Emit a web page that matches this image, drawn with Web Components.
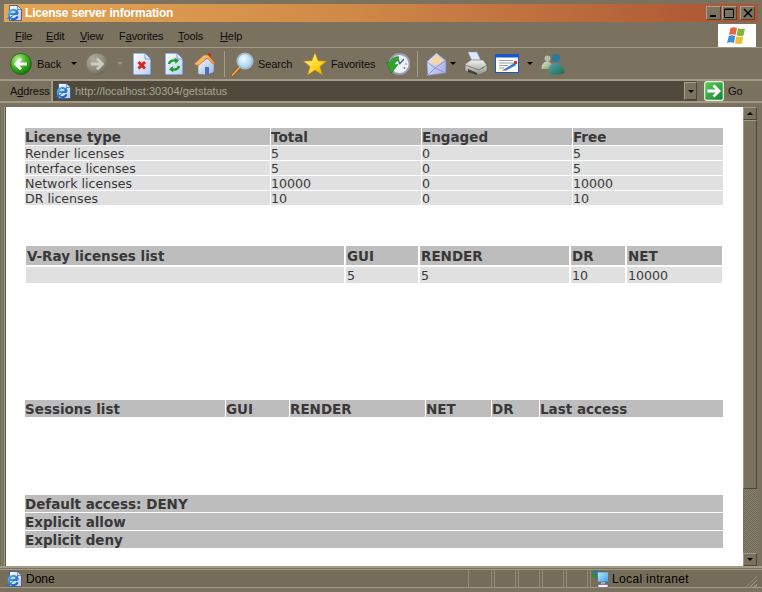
<!DOCTYPE html>
<html>
<head>
<meta charset="utf-8">
<title>License server information</title>
<style>
    html, body { margin: 0; padding: 0; background: #7a725f; overflow: hidden; }
</style>
</head>
<body>
<xp-window>
    <xp-titlebar slot="top">License server information</xp-titlebar>
    <xp-menubar slot="top">
        <span><u>F</u>ile</span><span><u>E</u>dit</span><span><u>V</u>iew</span><span>F<u>a</u>vorites</span><span><u>T</u>ools</span><span><u>H</u>elp</span>
    </xp-menubar>
    <xp-toolbar slot="top"></xp-toolbar>
    <xp-addressbar slot="top" url="http://localhost:30304/getstatus"></xp-addressbar>

    <data-table cols="245px 150px 150px 150px" gap="1" style="margin-top:21px">
        <data-cell head>License type</data-cell><data-cell head>Total</data-cell><data-cell head>Engaged</data-cell><data-cell head>Free</data-cell>
        <data-cell>Render licenses</data-cell><data-cell>5</data-cell><data-cell>0</data-cell><data-cell>5</data-cell>
        <data-cell>Interface licenses</data-cell><data-cell>5</data-cell><data-cell>0</data-cell><data-cell>5</data-cell>
        <data-cell>Network licenses</data-cell><data-cell>10000</data-cell><data-cell>0</data-cell><data-cell>10000</data-cell>
        <data-cell>DR licenses</data-cell><data-cell>10</data-cell><data-cell>0</data-cell><data-cell>10</data-cell>
    </data-table>

    <data-table cols="318px 72px 149px 54px 95px" gap="2" spaced style="margin:41px 1px 0">
        <data-cell head>V-Ray licenses list</data-cell><data-cell head>GUI</data-cell><data-cell head>RENDER</data-cell><data-cell head>DR</data-cell><data-cell head>NET</data-cell>
        <data-cell></data-cell><data-cell>5</data-cell><data-cell>5</data-cell><data-cell>10</data-cell><data-cell>10000</data-cell>
    </data-table>

    <data-table cols="200px 63px 135px 65px 47px 183px" gap="1" style="margin-top:117px">
        <data-cell head>Sessions list</data-cell><data-cell head>GUI</data-cell><data-cell head>RENDER</data-cell><data-cell head>NET</data-cell><data-cell head>DR</data-cell><data-cell head>Last access</data-cell>
    </data-table>

    <data-table cols="698px" gap="1" style="margin-top:78px">
        <data-cell head>Default access: DENY</data-cell>
        <data-cell head>Explicit allow</data-cell>
        <data-cell head>Explicit deny</data-cell>
    </data-table>

    <xp-statusbar slot="bottom"></xp-statusbar>
</xp-window>

<script>
// ==================== icons ====================

const IE_MARK = `
    <defs><linearGradient id="p" x1="0" y1="0" x2="1" y2="1"><stop offset="0" stop-color="#fff"/><stop offset="1" stop-color="#b7c9ee"/></linearGradient>
    <linearGradient id="e" x1="0" y1="0" x2="1" y2="1"><stop offset="0" stop-color="#58b6f2"/><stop offset="1" stop-color="#0f55c0"/></linearGradient></defs>
    <path d="M3.500.5h8l4 4v11h-12z" fill="url(#p)" stroke="#46557f" stroke-width=".9"/>
    <path d="M11.500 4.500v-4l4 4z" fill="#dfe8fa" stroke="#46557f" stroke-width=".6"/>
    <path d="M3.500 8.800h8.300M11.600 11.400a4.600 4.600 0 1 1 .3-2.600" fill="none" stroke="url(#e)" stroke-width="2.200"/>
    <path d="M.8 13.500c2 1 9-4.500 11.500-9.500" fill="none" stroke="#1d6fd0" stroke-width="1"/>`;

const ICONS = {
    back: `<svg width="22" height="22" viewBox="0 0 22 22">
        <defs><radialGradient id="g" cx="35%" cy="28%" r="80%"><stop offset="0" stop-color="#b8f08a"/><stop offset=".5" stop-color="#3fb51f"/><stop offset="1" stop-color="#0d6b0d"/></radialGradient></defs>
        <circle cx="11" cy="11" r="10.500" fill="url(#g)" stroke="#1f5f14" stroke-width=".7"/>
        <path d="M17 11H6.500M11 5.800 5.800 11l5.200 5.200" fill="none" stroke="#fff" stroke-width="3"/></svg>`,
    forward: `<svg width="22" height="22" viewBox="0 0 22 22">
        <defs><radialGradient id="g" cx="35%" cy="28%" r="80%"><stop offset="0" stop-color="#b0ab9e"/><stop offset=".6" stop-color="#8f8b7f"/><stop offset="1" stop-color="#66625a"/></radialGradient></defs>
        <circle cx="11" cy="11" r="10.500" fill="url(#g)"/>
        <path d="M5 11h10.500M11 5.800 16.200 11 11 16.200" fill="none" stroke="#cfccc2" stroke-width="3"/></svg>`,
    stop: `<svg width="20" height="24" viewBox="0 0 20 24">
        <defs><linearGradient id="g" x1="0" y1="0" x2="1" y2="1"><stop offset="0" stop-color="#fff"/><stop offset="1" stop-color="#b9cdf2"/></linearGradient></defs>
        <path d="M1 1h12l6 6v16H1z" fill="url(#g)" stroke="#5d6f9f"/><path d="M13 1v6h6z" fill="#dce6f8" stroke="#5d6f9f" stroke-width=".6"/>
        <path d="M6.500 10l6.500 6.500M13 10l-6.500 6.500" stroke="#d8261c" stroke-width="3"/></svg>`,
    refresh: `<svg width="20" height="24" viewBox="0 0 20 24">
        <defs><linearGradient id="g" x1="0" y1="0" x2="1" y2="1"><stop offset="0" stop-color="#fff"/><stop offset="1" stop-color="#b9cdf2"/></linearGradient></defs>
        <path d="M1 1h12l6 6v16H1z" fill="url(#g)" stroke="#5d6f9f"/><path d="M13 1v6h6z" fill="#dce6f8" stroke="#5d6f9f" stroke-width=".6"/>
        <path d="M5 12c.5-3 4-4.500 7-3" fill="none" stroke="#17a02c" stroke-width="2.400"/><path d="M10.500 5.500l4.500 3-3.500 3.500z" fill="#17a02c"/>
        <path d="M15 14c-.5 3-4 4.500-7 3" fill="none" stroke="#17a02c" stroke-width="2.400"/><path d="M9.500 20.500l-4.500-3 3.500-3.500z" fill="#17a02c"/></svg>`,
    home: `<svg width="24" height="24" viewBox="0 0 24 24">
        <defs><linearGradient id="g" x1="0" y1="0" x2="1" y2="1"><stop offset="0" stop-color="#ffd58a"/><stop offset="1" stop-color="#ef8a2c"/></linearGradient>
        <linearGradient id="w" x1="0" y1="0" x2="1" y2="1"><stop offset="0" stop-color="#f4f7ff"/><stop offset="1" stop-color="#9db4e4"/></linearGradient></defs>
        <rect x="15" y="1" width="3" height="5" fill="#a63a22"/>
        <path d="M5 12v10l9 1 7-3V10l-6-4z" fill="url(#w)" stroke="#6b7aa0" stroke-width=".6"/>
        <path d="M1 12 11 3l4 0 7 8-2 1-6-6-9 8z" fill="url(#g)" stroke="#b8691f" stroke-width=".6"/>
        <path d="M12 15h4v8h-4z" fill="#4a6fb5"/></svg>`,
    search: `<svg width="24" height="26" viewBox="0 0 24 26">
        <defs><radialGradient id="g" cx="40%" cy="35%" r="70%"><stop offset="0" stop-color="#f2fbff"/><stop offset="1" stop-color="#8ecdf0"/></radialGradient></defs>
        <path d="M2.500 24 9 17" stroke="#8a5a2a" stroke-width="3.600" stroke-linecap="round"/><path d="M2.500 24 9 17" stroke="#eeaa58" stroke-width="1.800" stroke-linecap="round"/>
        <circle cx="15" cy="10" r="7.700" fill="url(#g)" stroke="#a9b7c6" stroke-width="1.800"/></svg>`,
    star: `<svg width="24" height="24" viewBox="0 0 24 24">
        <defs><linearGradient id="g" x1="0" y1="0" x2="1" y2="1"><stop offset="0" stop-color="#fff79a"/><stop offset=".6" stop-color="#ffd51e"/><stop offset="1" stop-color="#e89a08"/></linearGradient></defs>
        <path d="M12 .8 15.200 8.800 23.500 9.200 17 14.500 19.500 23 12 18.200 4.500 23 7 14.500.5 9.200 8.800 8.800z" fill="url(#g)" stroke="#b8860b" stroke-width=".6"/></svg>`,
    history: `<svg width="24" height="24" viewBox="0 0 24 24">
        <circle cx="13.500" cy="12" r="10" fill="#e9f3fb" stroke="#9a9fb5" stroke-width="1.800"/>
        <path d="M13.500 12 18 7M13.500 12l-1-4" stroke="#4d5a78" stroke-width="1.200"/><circle cx="18.500" cy="16" r="1" fill="#e05a3c"/><circle cx="20" cy="12" r=".8" fill="#e05a3c"/>
        <path d="M.5 10.500l5 10.500 6.500-8.500-3.500.2c.4-2.300 1.700-3.700 4-4.300V4.500C7.500 5 4.600 7.200 4 10.500z" fill="#2fa52b" stroke="#17701a" stroke-width=".5"/></svg>`,
    mail: `<svg width="21" height="24" viewBox="0 0 21 24">
        <defs><linearGradient id="g" x1="0" y1="0" x2="1" y2="1"><stop offset="0" stop-color="#e0f2ff"/><stop offset="1" stop-color="#a8a6e6"/></linearGradient></defs>
        <path d="M1 9.500 10.500 1 20 8.500V21L1.500 23.500z" fill="url(#g)" stroke="#7d82c0" stroke-width=".7"/>
        <path d="M3.500 9.500 10.500 3l7 5.500-7 5z" fill="#f6d79c"/>
        <path d="M1 10l8 6 11-7.500M1.500 23.500 9 16l11 5" fill="none" stroke="#8a8fd0" stroke-width=".9"/></svg>`,
    print: `<svg width="24" height="25" viewBox="0 0 24 25">
        <defs><linearGradient id="g" x1="0" y1="0" x2="0" y2="1"><stop offset="0" stop-color="#f2f2ee"/><stop offset="1" stop-color="#8f8f8a"/></linearGradient></defs>
        <path d="M4 1h9l4 9H8z" fill="#dfe9fa" stroke="#8f9bb0" stroke-width=".6"/>
        <path d="M1 13l6-4h12l4 5v6l-8 4-14-4z" fill="url(#g)" stroke="#5f5f5a" stroke-width=".6"/>
        <path d="M1 14l14 5 8-5" fill="none" stroke="#6d6d68" stroke-width=".8"/><path d="M4 18l9 4v2l-9-3z" fill="#3f3f3c"/><rect x="18" y="16" width="2" height="1.500" fill="#38b13c"/></svg>`,
    edit: `<svg width="24" height="19" viewBox="0 0 24 19">
        <rect x=".5" y=".5" width="23" height="18" fill="#fff" stroke="#1a58c8"/><rect x="1" y="1" width="22" height="2.500" fill="#1a58c8"/>
        <path d="M4 6.500h14M4 9h16M4 11.500h9M4 14h5" stroke="#9a9ca8"/>
        <path d="M8 16l11-7 2.500 2L10 17z" fill="#3d7ad8"/><rect x="19" y="7" width="3" height="3" fill="#d8322a"/><path d="M6.500 17 8 15l2 2z" fill="#e6b53c"/></svg>`,
    messenger: `<svg width="24" height="22" viewBox="0 0 24 22">
        <defs><linearGradient id="g" x1="0" y1="0" x2="1" y2="1"><stop offset="0" stop-color="#5aa4b8"/><stop offset="1" stop-color="#1e6a48"/></linearGradient>
        <linearGradient id="h" x1="0" y1="0" x2="1" y2="1"><stop offset="0" stop-color="#e4e6cc"/><stop offset="1" stop-color="#7e9a6c"/></linearGradient></defs>
        <circle cx="6.500" cy="5.500" r="3" fill="#b4bfa8"/><path d="M.5 16c0-5 2.500-7.500 6-7.500s5 3 5 7.500z" fill="url(#h)"/>
        <circle cx="15" cy="5" r="4.300" fill="#2f7898"/><path d="M7 21c0-7.500 3-11 8-11s8.500 4 8.500 10c-3 2-13 2-16.500 1z" fill="url(#g)"/></svg>`,
    ie: `<svg width="16" height="16" viewBox="0 0 16 16">${IE_MARK}</svg>`,
    go: `<svg width="20" height="20" viewBox="0 0 20 20">
        <defs><linearGradient id="g" x1="0" y1="0" x2="1" y2="1"><stop offset="0" stop-color="#63cf5a"/><stop offset="1" stop-color="#0f7f35"/></linearGradient></defs>
        <rect x=".7" y=".7" width="18.600" height="18.600" rx="2" fill="url(#g)" stroke="#e7f3dd" stroke-width="1.200"/>
        <path d="M3.500 10h10M9.500 4.500l5.500 5.500-5.500 5.500" fill="none" stroke="#fff" stroke-width="2.800"/></svg>`,
    flag: `<svg width="20" height="19" viewBox="0 0 20 19">
        <path d="M3.500 2C6 .8 7.500 1 10 2L8.500 9C6 8 4 8 2 9z" fill="#e8643a"/>
        <path d="M11 2.300c2.500 1 4.500 1 7 .2L16.500 9.500c-2.500.8-4.500.6-7-.2z" fill="#7cb83a"/>
        <path d="M1.800 10C4 9 6 9 8.300 10L7 17c-2.500-1-4.500-1-7 0z" fill="#3f8fdf"/>
        <path d="M9.300 10.300c2.500 1 4.500 1 7 .2L15 17.500c-2.500.8-4.500.6-7-.2z" fill="#f2c02e"/></svg>`,
    network: `<svg width="17" height="18" viewBox="0 0 17 18">
        <defs><linearGradient id="g" x1="0" y1="0" x2="1" y2="1"><stop offset="0" stop-color="#b8ecff"/><stop offset="1" stop-color="#3f9ae8"/></linearGradient></defs>
        <circle cx="4" cy="4.500" r="4" fill="#2f8a3a"/><path d="M1.200 2c1.500-1.800 4-1.800 5.500 0L4 5z" fill="#2d6fd0"/>
        <rect x="5.500" y="2" width="11" height="10" rx=".7" fill="url(#g)" stroke="#57616f" stroke-width=".7"/>
        <path d="M9 12h4v2.500H9z" fill="#a3a9b4"/><path d="M6 14.500h10v3H6z" fill="#f0f0f4" stroke="#5a5575" stroke-width=".6"/></svg>`,
};

class XpIcon extends HTMLElement {
    connectedCallback() {
        if (this.shadowRoot) return;
        this.attachShadow({ mode: 'open' });
        this.shadowRoot.innerHTML = `
            <style>
                :host { display: block; flex: none; line-height: 0; }
                svg { display: block; }
            </style>
            ${ICONS[this.getAttribute('name')] || ''}
        `;
    }
}
customElements.define('xp-icon', XpIcon);

const UI_FONT = `"Liberation Sans", "Noto Sans", sans-serif`;

// ==================== window ====================

class XpWindow extends HTMLElement {
    constructor() {
        super();
        this.attachShadow({ mode: 'open' });
        this.shadowRoot.innerHTML = `
            <style>
                :host {
                    display: flex;
                    flex-direction: column;
                    width: 762px;
                    height: 592px;
                    padding-top: 4px;
                    box-sizing: border-box;
                    background: #7a725f;
                    overflow: hidden;
                    font-family: ${UI_FONT};
                }
                .middle {
                    display: flex;
                    height: 459px;
                    padding: 0 5px 0 6px;
                    flex: none;
                    background: linear-gradient(90deg, #6f6856 0 1px, #8a8370 1px 2px, #7a725f 2px 4px, #a39b85 4px 5px, #5d5747 5px 6px, transparent 6px);
                }
                .page {
                    flex: 1;
                    background: #fff;
                    padding: 0 20px 0 19px;
                    min-width: 0;
                    font-family: "DejaVu Sans", Verdana, sans-serif;
                    color: #383838;
                }
            </style>
            <slot name="top"></slot>
            <div class="middle">
                <div class="page"><slot></slot></div>
                <xp-scrollbar></xp-scrollbar>
            </div>
            <slot name="bottom"></slot>
        `;
    }
}
customElements.define('xp-window', XpWindow);

class XpTitlebar extends HTMLElement {
    constructor() {
        super();
        this.attachShadow({ mode: 'open' });
        this.shadowRoot.innerHTML = `
            <style>
                :host {
                    display: flex;
                    align-items: center;
                    height: 18px;
                    margin: 0 4px;
                    padding-left: 2px;
                    background: linear-gradient(90deg, #e3a655 0%, #d08a48 45%, #b05a36 92%, #ad5534 100%);
                    font: bold 12px ${UI_FONT};
                    color: #fff;
                }
                .caption { margin-left: 3px; flex: 1; letter-spacing: -.2px; }
                .btns { display: flex; margin-right: 3px; }
                .btn {
                    width: 15px;
                    height: 14px;
                    box-sizing: border-box;
                    background: #7a725f;
                    border: 1px solid;
                    border-color: #aaa38f #4b4639 #4b4639 #aaa38f;
                    display: flex;
                    align-items: center;
                    justify-content: center;
                }
            </style>
            <xp-icon name="ie"></xp-icon>
            <span class="caption"><slot></slot></span>
            <div class="btns">
                <div class="btn" style="margin-right:1px"><svg width="10" height="10"><rect x="1" y="7" width="6" height="2"/></svg></div>
                <div class="btn" style="margin-right:3px"><svg width="11" height="10"><path d="M.5 1.500h9v8h-9zM.5 1h9" fill="none" stroke="#000"/></svg></div>
                <div class="btn"><svg width="10" height="10"><path d="M1 1l8 8M9 1 1 9" stroke="#000" stroke-width="1.500"/></svg></div>
            </div>
        `;
    }
}
customElements.define('xp-titlebar', XpTitlebar);

class XpMenubar extends HTMLElement {
    constructor() {
        super();
        this.attachShadow({ mode: 'open' });
        this.shadowRoot.innerHTML = `
            <style>
                :host {
                    display: flex;
                    align-items: center;
                    height: 24px;
                    margin-top: 2px;
                    padding-left: 15px;
                    box-sizing: border-box;
                    border-bottom: 1px solid #a39b85;
                    font: 11px ${UI_FONT};
                    letter-spacing: -.1px;
                    color: #0c0c0c;
                }
                .items {
                    display: grid;
                    grid-template-columns: 31px 34px 39px 59px 42px 30px;
                    flex: 1;
                }
                .flag {
                    width: 38px;
                    height: 23px;
                    margin-right: 6px;
                    background: #fff;
                    display: flex;
                    align-items: center;
                    justify-content: center;
                }
            </style>
            <div class="items"><slot></slot></div>
            <div class="flag"><xp-icon name="flag"></xp-icon></div>
        `;
    }
}
customElements.define('xp-menubar', XpMenubar);

class XpToolbar extends HTMLElement {
    constructor() {
        super();
        this.attachShadow({ mode: 'open' });
        this.shadowRoot.innerHTML = `
            <style>
                :host {
                    display: flex;
                    align-items: center;
                    height: 33px;
                    padding-left: 10px;
                    box-sizing: border-box;
                    border-bottom: 2px solid #a39b85;
                    font: 11px ${UI_FONT};
                    letter-spacing: -.1px;
                    color: #0c0c0c;
                }
                .label { flex: none; white-space: nowrap; }
                .drop {
                    flex: none;
                    width: 0;
                    height: 0;
                    border: 3px solid transparent;
                    border-top: 3px solid #000;
                    border-bottom: 0;
                }
                .drop.off { border-top-color: #98927f; }
                .sep { flex: none; width: 1px; height: 26px; background: #a39b85; }
            </style>
            <xp-icon name="back"></xp-icon>
            <span class="label" style="margin-left:5px;width:24px">Back</span>
            <div class="drop" style="margin-left:10px"></div>
            <xp-icon name="forward" style="margin-left:9px"></xp-icon>
            <div class="drop off" style="margin-left:9px"></div>
            <xp-icon name="stop" style="margin-left:9px"></xp-icon>
            <xp-icon name="refresh" style="margin-left:12px"></xp-icon>
            <xp-icon name="home" style="margin-left:9px"></xp-icon>
            <div class="sep" style="margin-left:7px"></div>
            <xp-icon name="search" style="margin-left:5px"></xp-icon>
            <span class="label" style="margin-left:4px;width:33px">Search</span>
            <xp-icon name="star" style="margin-left:12px"></xp-icon>
            <span class="label" style="margin-left:4px;width:42px">Favorites</span>
            <xp-icon name="history" style="margin-left:13px"></xp-icon>
            <div class="sep" style="margin-left:7px"></div>
            <xp-icon name="mail" style="margin-left:8px"></xp-icon>
            <div class="drop" style="margin-left:3px"></div>
            <xp-icon name="print" style="margin-left:8px"></xp-icon>
            <xp-icon name="edit" style="margin-left:7px"></xp-icon>
            <div class="drop" style="margin-left:8px"></div>
            <xp-icon name="messenger" style="margin-left:8px"></xp-icon>
        `;
    }
}
customElements.define('xp-toolbar', XpToolbar);

class XpAddressbar extends HTMLElement {
    constructor() {
        super();
        this.attachShadow({ mode: 'open' });
        this.shadowRoot.innerHTML = `
            <style>
                :host {
                    display: flex;
                    align-items: center;
                    height: 22px;
                    margin-bottom: 4px;
                    padding-left: 10px;
                    box-sizing: border-box;
                    border-bottom: 2px solid #a39b85;
                    font: 11px ${UI_FONT};
                    letter-spacing: -.1px;
                    color: #0c0c0c;
                }
                .name { width: 41px; flex: none; white-space: nowrap; }
                .field {
                    display: flex;
                    align-items: center;
                    width: 646px;
                    height: 20px;
                    flex: none;
                    box-sizing: border-box;
                    padding: 0 0 0 2px;
                    background: #4f4a3c;
                    color: #aaa592;
                    border-left: 2px solid #a39b85;
                    font-size: 11px;
                    letter-spacing: 0;
                }
                .url { margin-left: 4px; flex: 1; }
                .arrow {
                    width: 13px;
                    height: 18px;
                    box-sizing: border-box;
                    background: #7a725f;
                    border: 1px solid;
                    border-color: #aaa38f #4b4639 #4b4639 #aaa38f;
                    display: flex;
                    align-items: center;
                    justify-content: center;
                }
                .arrow i { border: 3px solid transparent; border-top-color: #000; border-bottom: 0; }
                .go { margin-left: 7px; }
                .gotext { margin-left: 4px; }
            </style>
            <span class="name">A<u>d</u>dress</span>
            <div class="field">
                <xp-icon name="ie"></xp-icon>
                <span class="url">${this.getAttribute('url') || ''}</span>
                <div class="arrow"><i></i></div>
            </div>
            <xp-icon class="go" name="go"></xp-icon>
            <span class="gotext">Go</span>
        `;
    }
}
customElements.define('xp-addressbar', XpAddressbar);

class XpScrollbar extends HTMLElement {
    constructor() {
        super();
        this.attachShadow({ mode: 'open' });
        this.shadowRoot.innerHTML = `
            <style>
                :host {
                    display: flex;
                    flex-direction: column;
                    width: 14px;
                    flex: none;
                    background: conic-gradient(#8a8370 25%, #6e6756 0 50%, #8a8370 0 75%, #6e6756 0) 0 0 / 2px 2px;
                }
                .part {
                    box-sizing: border-box;
                    background: #7a725f;
                    border: 1px solid;
                    border-color: #a39b85 #4b4639 #4b4639 #a39b85;
                    flex: none;
                }
                .btn { height: 13px; display: flex; align-items: center; justify-content: center; }
                .up { border-bottom: 3.500px solid #000; border-left: 3.500px solid transparent; border-right: 3.500px solid transparent; }
                .down { border-top: 3.500px solid #000; border-left: 3.500px solid transparent; border-right: 3.500px solid transparent; }
                .thumb { height: 369px; }
                .fill { flex: 1; }
            </style>
            <div class="part btn"><i class="up"></i></div>
            <div class="part thumb"></div>
            <div class="fill"></div>
            <div class="part btn"><i class="down"></i></div>
        `;
    }
}
customElements.define('xp-scrollbar', XpScrollbar);

class XpStatusbar extends HTMLElement {
    constructor() {
        super();
        this.attachShadow({ mode: 'open' });
        const panels = [24, 22, 22, 22, 22];
        this.shadowRoot.innerHTML = `
            <style>
                :host {
                    display: flex;
                    align-items: center;
                    height: 26px;
                    padding: 0 0 4px 6px;
                    box-sizing: border-box;
                    background: linear-gradient(180deg, #a39b85 0 2px, #7a725f 2px 3px, #a39b85 3px 4px, #756d5a 4px 21px, #a39b85 21px 22px, #7a725f 22px);
                    font: 12px ${UI_FONT};
                    color: #000;
                    position: relative;
                }
                .inner { display: flex; align-items: center; margin-top: 4px; height: 18px; }
                .done { margin-left: 4px; width: 442px; flex: none; }
                .panel {
                    height: 18px;
                    margin-right: 2px;
                    box-sizing: border-box;
                    border: solid #948c76;
                    border-width: 0 1px;
                    flex: none;
                }
                .zone { display: flex; align-items: center; border-left: 1px solid #948c76; padding-left: 1px; height: 18px; }
                .zone span { margin-left: 3px; letter-spacing: .35px; }
                .grip {
                    position: absolute;
                    right: 5px;
                    bottom: 4px;
                    width: 12px;
                    height: 12px;
                    background: repeating-linear-gradient(135deg, transparent 0 2px, #a39b85 2px 3px);
                    clip-path: polygon(100% 0, 100% 100%, 0 100%);
                }
            </style>
            <div class="inner">
                <xp-icon name="ie"></xp-icon>
                <span class="done">Done</span>
                ${panels.map(w => `<div class="panel" style="width:${w}px"></div>`).join('')}
                <div class="zone"><xp-icon name="network"></xp-icon><span>Local intranet</span></div>
            </div>
            <div class="grip"></div>
        `;
    }
}
customElements.define('xp-statusbar', XpStatusbar);

// ==================== page tables ====================

class DataTable extends HTMLElement {
    constructor() {
        super();
        this.attachShadow({ mode: 'open' });
        this.shadowRoot.innerHTML = `
            <style>
                :host { display: block; --head-h: 17px; --row-h: 14px; --cell-pad: 0; }
                :host([spaced]) { --head-h: 19px; --row-h: 16px; --cell-pad: 1px; }
                .grid { display: grid; }
            </style>
            <div class="grid"><slot></slot></div>
        `;
    }

    connectedCallback() {
        const grid = this.shadowRoot.querySelector('.grid');
        grid.style.gridTemplateColumns = this.getAttribute('cols');
        grid.style.gap = (this.getAttribute('gap') || 1) + 'px';
    }
}
customElements.define('data-table', DataTable);

class DataCell extends HTMLElement {
    constructor() {
        super();
        this.attachShadow({ mode: 'open' });
        this.shadowRoot.innerHTML = `
            <style>
                :host {
                    display: block;
                    height: var(--row-h);
                    line-height: calc(var(--row-h) + 1px);
                    padding-left: var(--cell-pad);
                    font-size: 12.600px;
                    background: #e0e0e0;
                    white-space: nowrap;
                    overflow: hidden;
                }
                :host([head]) {
                    height: var(--head-h);
                    line-height: calc(var(--head-h) + 2px);
                    font-size: 13.500px;
                    font-weight: bold;
                    background: #bdbdbd;
                }
            </style>
            <slot></slot>
        `;
    }
}
customElements.define('data-cell', DataCell);
</script>
</body>
</html>
